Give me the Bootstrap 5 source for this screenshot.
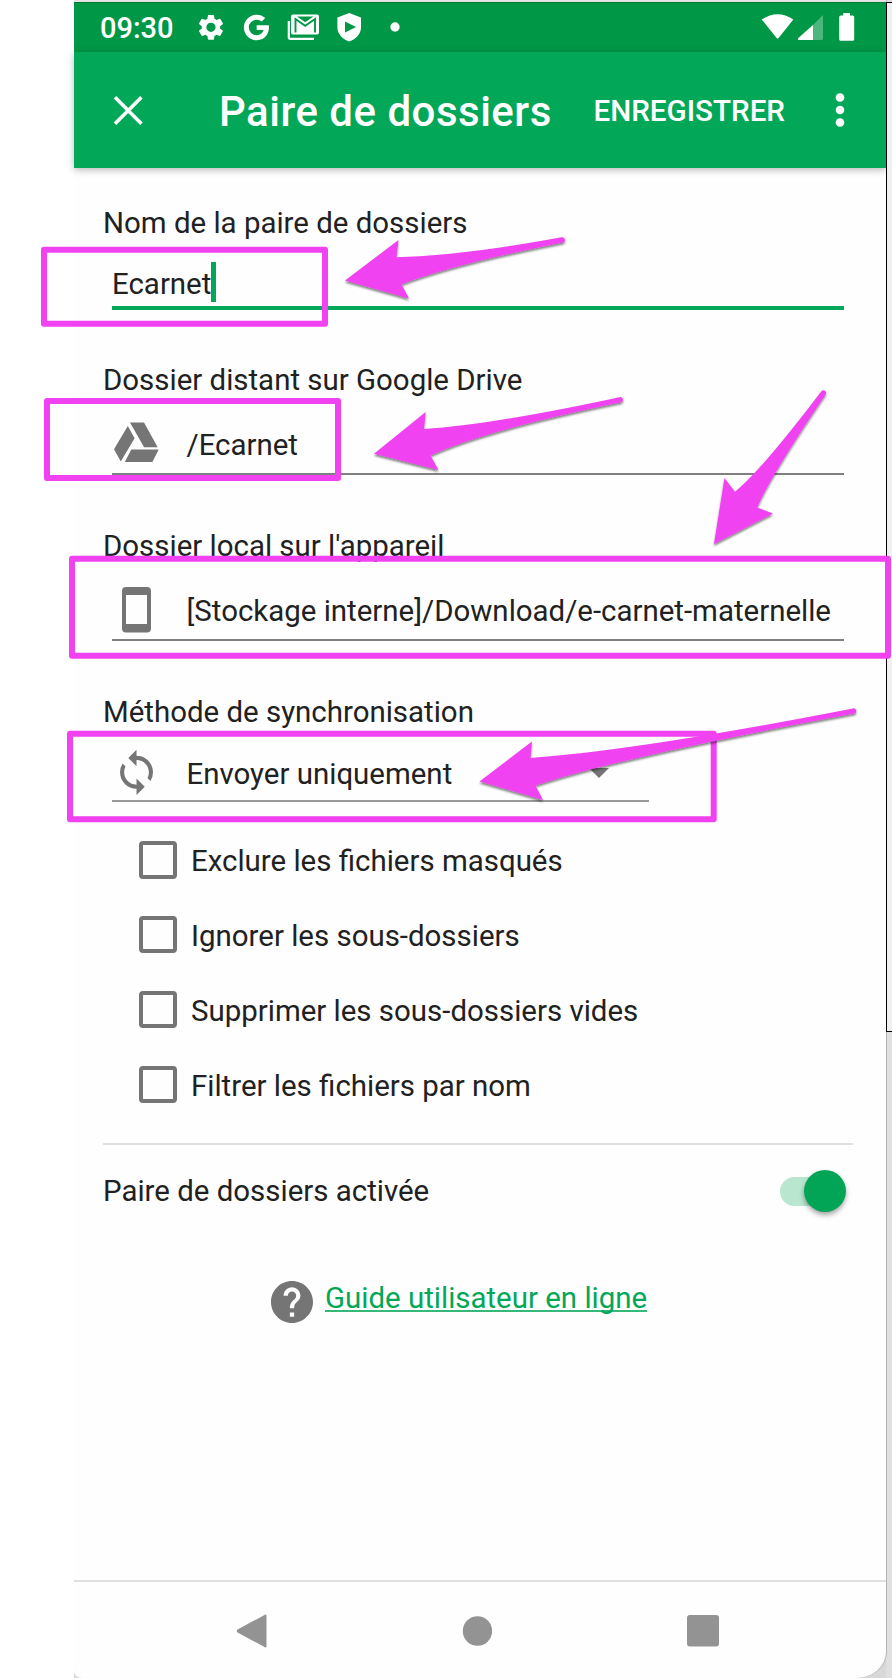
<!DOCTYPE html>
<html lang="fr">
<head>
<meta charset="utf-8">
<meta name="viewport" content="width=device-width, initial-scale=1">
<title>Paire de dossiers</title>
<link href="https://cdn.jsdelivr.net/npm/bootstrap@5.3.0/dist/css/bootstrap.min.css" rel="stylesheet">
<style>
  :root { --green: #02a758; --ink: #212121; --grey: #757575; --pink: #f042f0; }
  body { font-family: Roboto, "Liberation Sans", sans-serif; font-size: 29.45px; line-height: 40px; color: var(--ink); background: #fff; width: 892px; height: 1678px; overflow: hidden; }
  svg { display: block; flex: none; }
  .phone-wrap { width: 818px; margin-left: 74px; background: linear-gradient(90deg, #d8d8d8 812px, #e0e0e0 812px); }
  .phone { width: 812px; height: 1678px; background: #fefefe; border-radius: 0 0 30px 8px / 0 0 26px 7px; box-shadow: 1px 0 #b5b5b5; }
  .statusbar { height: 52px; background: #009746; border-top: 2px solid #e4e4e4; box-shadow: inset 0 1px #007a2c; padding: 0 31px 0 26px; color: #fff; font-weight: 500; }
  .clock { font-size: 29px; position: relative; top: 1px; }
  .appbar { height: 116px; background: var(--green); color: #fff; font-weight: 500; box-shadow: 0 2px 7px rgba(0,0,0,.28); padding: 0 41px 0 39px; }
  .appbar h1 { font-size: 42px; font-weight: 500; line-height: 50px; letter-spacing: .5px; margin: 4px 0 0 75px; white-space: nowrap; }
  .save { font-size: 29.6px; margin: 2px 50px 0 auto; }
  .content { padding: 35px 33px 0 29px; }
  .field { margin: 0 9px 50px; border-bottom: 2px solid #808080; white-space: nowrap; }
  .field-name { height: 67px; border-bottom: 4px solid var(--green); padding-top: 21px; }
  .field-dir { height: 75px; padding-top: 25px; margin-bottom: 51px; }
  .field-method { height: 70px; width: 537px; padding-top: 22px; margin-bottom: 21px; border-color: #999; }
  .glyph { width: 74.500px; margin-top: -8px; }
  .caret { width: 4.500px; height: 40px; margin-top: -2px; background: var(--green); }
  .check-row { height: 74.8px; padding-left: 36px; }
  .check-row span { padding-top: 2px; }
  .box { width: 37.5px; height: 37.5px; border: 4px solid var(--grey); border-radius: 4px; margin: -1px 14.500px 0 0; }
  .rule { height: 2px; background: #dfdfdf; margin-top: 21px; }
  .track { position: relative; width: 62px; height: 29px; border-radius: 15px; background: #b9e6cf; margin-right: 11px; }
  .thumb { position: absolute; right: -4px; top: -7px; width: 42px; height: 42px; border-radius: 50%; background: #02a556; box-shadow: 0 3px 5px rgba(0,0,0,.35); }
  .guide { color: var(--green); text-decoration-color: rgba(2,167,88,.8); text-decoration-thickness: 2px; text-underline-offset: 2px; text-decoration-skip-ink: none; padding-top: 1px; }
  .guide:hover { color: var(--green); }
  .navkeys { height: 98px; border-top: 2px solid #e0e0e0; padding: 1px 167px 0 161.500px; }
  .side { position: absolute; left: 886px; top: 2px; width: 6px; height: 1030px; border: solid #000; border-width: 1px 0 1px 1px; background: #f0f0f0; }
  .marks { position: absolute; left: 0; top: 0; pointer-events: none; }
</style>
</head>
<body class="position-relative">
<div class="phone-wrap">
<main class="phone d-flex flex-column">
  <div class="statusbar d-flex align-items-center">
    <span class="clock">09:30</span>
    <svg width="260" height="50" viewBox="198 2 260 50" style="margin-left:24px" fill="#fff">
      <path transform="translate(195.6 12) scale(1.28)" d="M19.14 12.94c.04-.3.06-.61.06-.94s-.02-.64-.07-.94l2.03-1.58a.49.49 0 0 0 .12-.61l-1.92-3.32a.49.49 0 0 0-.59-.22l-2.39.96a7 7 0 0 0-1.62-.94l-.36-2.54A.48.48 0 0 0 13.92 2.400h-3.84a.48.48 0 0 0-.47.41l-.36 2.54c-.59.24-1.13.57-1.62.94l-2.39-.96a.48.48 0 0 0-.59.22L2.740 8.870a.47.47 0 0 0 .12.61l2.030 1.580c-.05.3-.09.63-.09.94s.02.64.07.94l-2.030 1.580a.49.49 0 0 0-.12.61l1.920 3.320c.12.22.37.29.59.22l2.390-.96c.5.38 1.030.7 1.620.94l.36 2.540c.05.24.24.41.48.41h3.840c.24 0 .44-.17.47-.41l.36-2.540c.59-.24 1.130-.56 1.620-.94l2.390.96c.22.08.47 0 .59-.22l1.920-3.320a.47.47 0 0 0-.12-.61zM12 15.600a3.600 3.600 0 1 1 0-7.200 3.600 3.600 0 0 1 0 7.200z"/>
      <path transform="translate(240.6 12.100) scale(1.280)" d="M12.545 10.239v3.821h5.445c-.712 2.315-2.647 3.972-5.445 3.972a6.033 6.033 0 1 1 0-12.064c1.498 0 2.866.549 3.921 1.453l2.814-2.814A9.969 9.969 0 0 0 12.545 2C7.021 2 2.543 6.477 2.543 12s4.478 10 10.002 10c8.396 0 10.249-7.850 9.426-11.748z"/>
      <path d="M293 14.500h24a2 2 0 0 1 2 2v16a2 2 0 0 1-2 2h-24a2 2 0 0 1-2-2v-16a2 2 0 0 1 2-2z"/>
      <path d="M295.500 32.500V19l9.700 6.800L315 19v13.500" fill="none" stroke="#009746" stroke-width="1.900"/>
      <path d="M297 16.600h16.500l-8.300 5.600z" fill="#009746"/>
      <path d="M288.800 21v16.200a1.600 1.600 0 0 0 1.600 1.600H314" fill="none" stroke="#fff" stroke-width="2.200"/>
      <path fill-rule="evenodd" d="M349.200 13l11.800 4.600v9.600c0 6.600-5 12-11.800 14.200-6.800-2.200-11.800-7.600-11.800-14.200v-9.600zM345 21.500v11l11-5.500z"/>
      <circle cx="395" cy="27" r="4.700"/>
    </svg>
    <svg class="ms-auto" width="96" height="50" viewBox="760 2 96 50" fill="#fff">
      <path d="M762.700 19.500q15.800-10.700 31.600 0L779.600 38q-1 1-2 0z"/>
      <path d="M824 15v23.500q0 1.500-1.500 1.500H814V25z" opacity=".3"/>
      <path d="M814 25v15h-14q-2-.5-.6-2z"/>
      <path d="M844.300 13h6.700v2.500h2.700q1.500 0 1.500 1.500v22.300q0 1.500-1.500 1.500h-12q-1.500 0-1.500-1.500V17q0-1.500 1.500-1.500h2.600z"/>
    </svg>
  </div>
  <div class="appbar d-flex align-items-center">
    <svg width="31" height="31" viewBox="0 0 31 31" stroke="#fff" stroke-width="3.600"><path d="M2 2.300l26.400 26.400M28.400 2.300L2 28.700"/></svg>
    <h1>Paire de dossiers</h1>
    <span class="save">ENREGISTRER</span>
    <svg width="10" height="36" viewBox="0 0 10 36" fill="#fff"><circle cx="5" cy="5.500" r="4.300"/><circle cx="5" cy="18" r="4.300"/><circle cx="5" cy="30.500" r="4.300"/></svg>
  </div>

  <div class="content flex-grow-1">
    <div>Nom de la paire de dossiers</div>
    <div class="field field-name d-flex"><span>Ecarnet</span><i class="caret"></i></div>
    <div>Dossier distant sur Google Drive</div>
    <div class="field field-dir d-flex">
      <div class="glyph"><svg width="50" height="56" viewBox="112 417 50 56" fill="#757575"><path d="M130 422.500h14l13.700 24.800h-13.600zM127.800 426l6.800 12.300L120.800 461.500 114 449.300zM131.300 449.500H158.700l-6.300 12.500h-27.600z"/></svg></div>
      <span>/Ecarnet</span>
    </div>
    <div>Dossier local sur l'appareil</div>
    <div class="field field-dir d-flex">
      <div class="glyph"><svg width="50" height="56" viewBox="112 583 50 56" fill="#757575"><path fill-rule="evenodd" d="M126 587h21q4 0 4 4v37.500q0 4-4 4h-21q-4 0-4-4V591q0-4 4-4zM126 595v29h21v-29z"/></svg></div>
      <span>[Stockage interne]/Download/e-carnet-maternelle</span>
    </div>
    <div>Méthode de synchronisation</div>
    <div class="field field-method d-flex">
      <div class="glyph"><svg width="50" height="54" viewBox="112 746 50 54" fill="#757575"><path transform="translate(111.800 747.600) scale(2.060)" d="M12 4V1L8 5l4 4V6c3.310 0 6 2.690 6 6 0 1.010-.25 1.970-.7 2.800l1.460 1.460A7.930 7.930 0 0 0 20 12c0-4.420-3.580-8-8-8zm0 14c-3.310 0-6-2.690-6-6 0-1.010.25-1.970.7-2.800L5.240 7.740A7.930 7.930 0 0 0 4 12c0 4.420 3.580 8 8 8v3l4-4-4-4z"/></svg></div>
      <span>Envoyer uniquement</span>
      <svg class="ms-auto" width="20" height="12" viewBox="0 0 20 12" style="margin:13px 40px 0 0" fill="#757575"><path d="M0 1h20l-10 10z"/></svg>
    </div>
    <div class="check-row d-flex align-items-center"><i class="box"></i><span>Exclure les fichiers masqués</span></div>
    <div class="check-row d-flex align-items-center"><i class="box"></i><span>Ignorer les sous-dossiers</span></div>
    <div class="check-row d-flex align-items-center"><i class="box"></i><span>Supprimer les sous-dossiers vides</span></div>
    <div class="check-row d-flex align-items-center"><i class="box"></i><span>Filtrer les fichiers par nom</span></div>
    <div class="rule"></div>
    <div class="d-flex align-items-center justify-content-between" style="margin-top:26px">
      <span>Paire de dossiers activée</span>
      <div class="track"><div class="thumb"></div></div>
    </div>
    <div class="d-flex" style="margin:66px 0 0 167.500px">
      <svg width="42" height="42" viewBox="2 2 20 20" fill="#757575" style="margin:4px 12.500px 0 0"><path d="M12 2C6.480 2 2 6.480 2 12s4.480 10 10 10 10-4.480 10-10S17.520 2 12 2zm1 17h-2v-2h2v2zm2.070-7.750l-.9.920C13.450 12.900 13 13.500 13 15h-2v-.5c0-1.100.45-2.100 1.170-2.830l1.240-1.260c.37-.36.590-.86.590-1.410 0-1.100-.9-2-2-2s-2 .9-2 2H8c0-2.210 1.790-4 4-4s4 1.790 4 4c0 .88-.36 1.680-.93 2.250z"/></svg>
      <a class="guide" href="#">Guide utilisateur en ligne</a>
    </div>
  </div>

  <div class="navkeys d-flex align-items-center justify-content-between">
    <svg width="31" height="34" viewBox="0 0 31 34" fill="#939393"><path d="M30.500 1.500v31q-.6 1.500-2 .5L1.500 18.500q-1.500-1.500 0-3L28.500 1q1.400-1 2 .5z"/></svg>
    <svg width="30" height="30" viewBox="-1 0 30 30" fill="#939393"><circle cx="15" cy="15" r="14.700" transform="translate(-.5 0)"/></svg>
    <svg width="32" height="32" viewBox="0 0 32 32" fill="#939393"><rect width="32" height="31.500" rx="3"/></svg>
  </div>
</main>
</div>
<aside class="side"></aside>

<svg class="marks" width="892" height="1678" viewBox="0 0 892 1678" fill="#f042f0">
  <defs><filter id="drop" x="-10%" y="-10%" width="120%" height="130%"><feDropShadow dx="0" dy="2" stdDeviation="1.300" flood-color="#000" flood-opacity=".5"/></filter></defs>
  <g fill="none" stroke="#f042f0" stroke-width="6" stroke-linejoin="round">
    <rect x="44" y="249.700" width="281" height="74"/>
    <rect x="47" y="401" width="291" height="77"/>
    <rect x="72" y="558.700" width="816" height="97"/>
    <rect x="70" y="733.700" width="643.700" height="85.600"/>
  </g>
  <g filter="url(#drop)">
    <path d="M345 280.500L398.500 240 396.500 257.200Q460 256 561.500 237.300A2.600 2.600 0 0 1 563 242.500Q455 264 401.500 284.200L409 298.500z"/>
    <path d="M374 453.700L425.700 412 424 429Q490 425 619.500 397.200A2.600 2.600 0 0 1 621 402.300Q482 431 430.500 455.500L438.500 470z"/>
    <path d="M714 544L724.500 478 735 491.700Q760 472 821.200 391.500A2.600 2.600 0 0 1 825.600 394.400Q771 475 757.200 507.500L773 513.500z"/>
    <path d="M479.500 781.500L532 741.500 530.500 758Q640 750 853 708.500A2.600 2.600 0 0 1 854.300 713.600Q620 757 535.500 785.500L543 800z"/>
  </g>
</svg>
<script src="https://cdn.jsdelivr.net/npm/bootstrap@5.3.0/dist/js/bootstrap.bundle.min.js"></script>
</body>
</html>
